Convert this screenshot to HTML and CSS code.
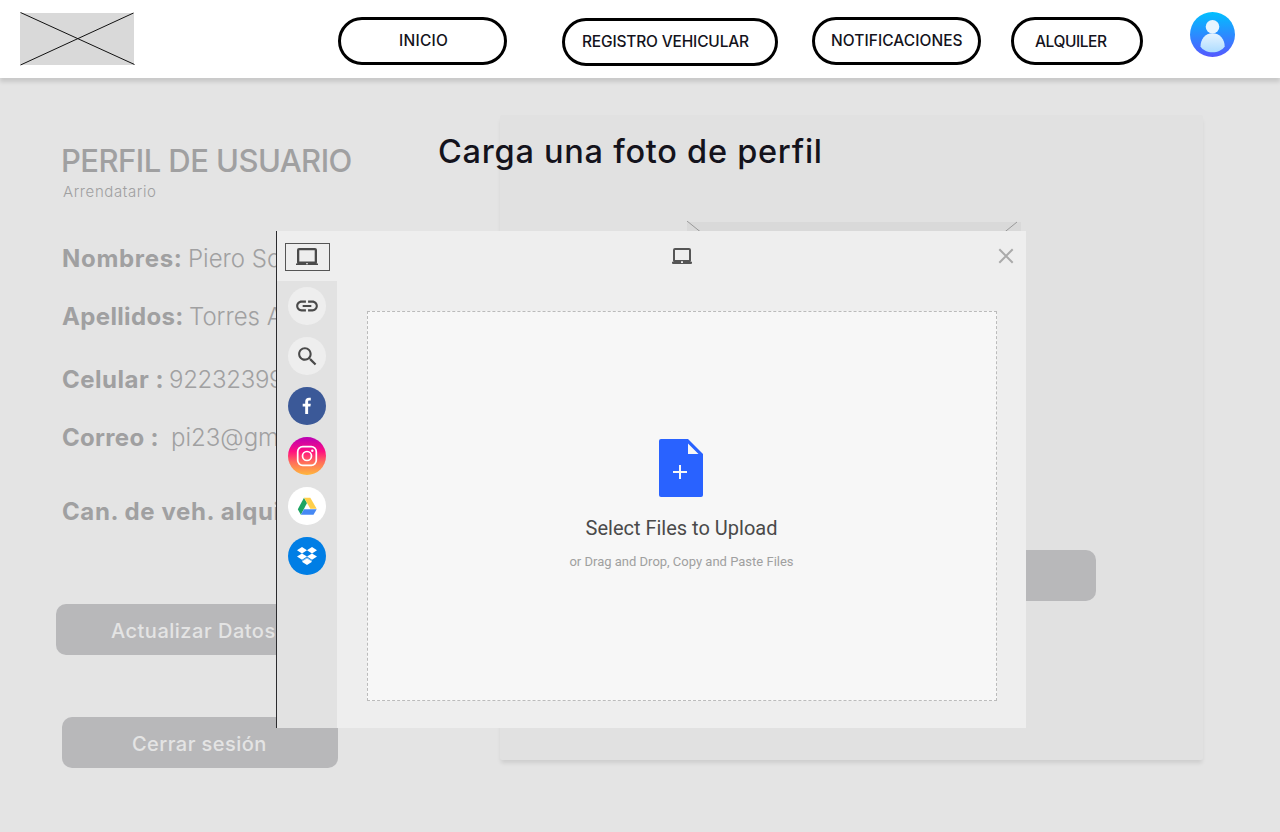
FILE: index.html
```html
<!DOCTYPE html>
<html lang="es">
<head>
<meta charset="utf-8">
<title>Perfil de usuario</title>
<link rel="stylesheet" href="styles.css">
</head>
<body>
<header class="topbar">
  <svg class="logo" width="116" height="54" viewBox="0 0 116 54"><rect x="0" y="1" width="114" height="52" fill="#d9d9d9"/><path d="M.5 .5 114.500 52.500M.5 53 113.500 1" stroke="#111" stroke-width="1" fill="none"/></svg>
  <nav class="nav">
    <a class="pill inicio"><span>INICIO</span></a>
    <a class="pill registro"><span>REGISTRO VEHICULAR</span></a>
    <a class="pill notif"><span>NOTIFICACIONES</span></a>
    <a class="pill alquiler"><span>ALQUILER</span></a>
  </nav>
  <svg class="avatar" width="45" height="45" viewBox="0 0 45 45">
    <defs>
      <linearGradient id="sky" x1="0" y1="0" x2="0" y2="1"><stop offset="0" stop-color="#00c0ff"/><stop offset="1" stop-color="#5558ff"/></linearGradient>
      <linearGradient id="torso" x1="0" y1="0" x2="0" y2="1"><stop offset="0" stop-color="#e8f4ff"/><stop offset="1" stop-color="#addcff"/></linearGradient>
    </defs>
    <circle cx="22.500" cy="22.500" r="22.500" fill="url(#sky)"/>
    <path d="M22.500 21.300C15 21.300 10.500 27.500 10.500 34.500C12.500 38 17.500 40.300 22.500 40.300S32.500 38 34.700 34.500C34.700 27.500 30 21.300 22.500 21.300Z" fill="url(#torso)"/>
    <circle cx="22.500" cy="14.700" r="6.800" fill="#e8f5ff"/>
  </svg>
</header>
<main class="page">
  <section class="profile">
    <h1>PERFIL DE USUARIO</h1>
    <p class="role">Arrendatario</p>
    <dl class="fields">
      <div class="row nombres"><dt>Nombres:</dt><dd>Piero So</dd></div>
      <div class="row apellidos"><dt>Apellidos:</dt><dd>Torres A</dd></div>
      <div class="row celular"><dt>Celular :</dt><dd>92232399</dd></div>
      <div class="row correo"><dt>Correo :</dt><dd>pi23@gmail</dd></div>
      <div class="row cantidad"><dt>Can. de veh. alqui</dt></div>
    </dl>
    <button class="btn update">Actualizar Datos</button>
    <button class="btn logout">Cerrar sesión</button>
  </section>
  <section class="panel">
    <svg class="photo" width="334" height="270" viewBox="0 0 334 270"><rect y="1" width="334" height="268" fill="#d9d9d9"/><path d="M0 0 334 270M330 1 0 269" stroke="#999" fill="none"/></svg>
    <div class="btn upload"></div>
  </section>
</main>
<h2 class="title">Carga una foto de perfil</h2>
<div class="picker">
  <aside class="sources">
    <div class="source active"><div class="focus"><svg width="24" height="24" viewBox="0 0 24 24"><path fill="#4a4a4a" fill-rule="evenodd" d="M4 3H20Q22 3 22 5V17Q22 18 21.500 18.500H23V20H1V18.500H2.500Q2 18 2 17V5Q2 3 4 3ZM4.300 5.200V16.500H19.700V5.200ZM11 18.200V19.200H13V18.200Z"/></svg></div></div>
    <div class="source"><i class="disc light"><svg width="26" height="26" viewBox="0 0 24 24"><path fill="#4a4a4a" d="M3.900 12c0-1.710 1.390-3.100 3.100-3.100h4V7H7c-2.760 0-5 2.240-5 5s2.240 5 5 5h4v-1.900H7c-1.710 0-3.100-1.390-3.100-3.100zM8 13h8v-2H8v2zm9-6h-4v1.900h4c1.710 0 3.100 1.390 3.100 3.100s-1.390 3.100-3.100 3.100h-4V17h4c2.760 0 5-2.240 5-5s-2.240-5-5-5z"/></svg></i></div>
    <div class="source"><i class="disc light"><svg width="25" height="25" viewBox="0 0 24 24"><path fill="#4a4a4a" d="M15.500 14h-.79l-.28-.27C15.410 12.590 16 11.110 16 9.500 16 5.910 13.090 3 9.500 3S3 5.910 3 9.500 5.910 16 9.500 16c1.610 0 3.090-.59 4.230-1.570l.27.280v.79l5 4.990L20.490 19l-4.990-5zm-6 0C7.010 14 5 11.990 5 9.500S7.010 5 9.500 5 14 7.010 14 9.500 11.990 14 9.500 14z"/></svg></i></div>
    <div class="source"><i class="disc facebook"><svg width="24" height="24" viewBox="0 0 24 24"><path fill="#fff" d="M10.200 20V12.600H7.700V9.700H10.200V7.700C10.200 5.100 11.700 3.700 14 3.700L15.800 3.800V6.500H14.500C13.400 6.500 13.100 7 13.100 7.900V9.700H15.800L15.400 12.600H13.100V20Z"/></svg></i></div>
    <div class="source"><i class="disc instagram"><svg width="24" height="24" viewBox="0 0 24 24" fill="none" stroke="#fff" stroke-width="1.700"><rect x="2.700" y="2.700" width="18.600" height="18.600" rx="5"/><circle cx="12" cy="12" r="4.500"/><circle cx="17.300" cy="6.700" r="1.200" fill="#fff" stroke="none"/></svg></i></div>
    <div class="source"><i class="disc drive"><svg width="24" height="24" viewBox="0 0 24 24"><path fill="#1da462" d="M9 3.700 12 9 5.900 20.800 2.800 15.200Z"/><path fill="#ffcf4a" d="M9 3.700H15.300L21.700 14.700H15.300Z"/><path fill="#4688f4" d="M9 15.300H21.700L18.500 20.800H5.900Z"/></svg></i></div>
    <div class="source"><i class="disc dropbox"><svg width="24" height="24" viewBox="0 0 24 24" fill="#fff"><path d="M7 3 12 6.200 7 9.400 2 6.200ZM17 3 22 6.200 17 9.400 12 6.200ZM7 9.400 12 12.600 7 15.800 2 12.600ZM17 9.400 22 12.600 17 15.800 12 12.600ZM12 13.500 16.700 16.600V18L12 21 7.300 18V16.600Z"/><path d="M7.300 17 12 14 16.700 17" fill="none" stroke="#007ee5" stroke-width=".5"/></svg></i></div>
  </aside>
  <div class="body">
    <div class="bar">
      <svg class="device" width="24" height="24" viewBox="0 0 24 24"><path fill="#555" fill-rule="evenodd" d="M5 4H19Q21 4 21 6V16.500L20.500 17.700H22V19Q22 20 21 20H3Q2 20 2 19V17.700H3.500L3 16.500V6Q3 4 5 4ZM5 6V16H19V6ZM11 17.300V19H13V17.300Z"/></svg>
      <svg class="close" width="16" height="16" viewBox="0 0 16 16"><path d="M1.300 1.300 14.700 14.700M14.700 1.300 1.300 14.700" stroke="#aaa" stroke-width="2"/></svg>
    </div>
    <div class="drop">
      <svg class="file" width="44" height="58" viewBox="0 0 44 58"><path fill="#2962ff" d="M2 0H29L44 15V56Q44 58 42 58H2Q0 58 0 56V2Q0 0 2 0Z"/><path fill="#f7f7f7" d="M29 4.500 39.500 15H29ZM20 26H22V32H28V34H22V40H20V34H14V32H20Z"/></svg>
      <p class="select">Select Files to Upload</p>
      <p class="hint">or Drag and Drop, Copy and Paste Files</p>
    </div>
  </div>
</div>
</body>
</html>
```
FILE: styles.css
```css
* { box-sizing: border-box; }
body { margin: 0; position: relative; width: 1280px; height: 832px; overflow: hidden; background: #e4e4e4; font-family: Inter, "Open Sans", sans-serif; }
h1, h2, p, dl, dt, dd { margin: 0; font-weight: 400; white-space: nowrap; }
svg { display: block; flex: none; }

.topbar { display: flex; align-items: flex-start; height: 78px; padding-left: 20px; background: #fff; position: relative; box-shadow: 0 4px 4px rgba(0, 0, 0, .12); }
.logo { margin-top: 12px; }
.nav { display: flex; margin: 17px 0 0 202px; width: 805px; }
.pill { flex: none; height: 48px; border: 3px solid #000; border-radius: 24px; font-size: 15.500px; line-height: 42px; font-weight: 500; color: #14131c; white-space: nowrap; }
.inicio { width: 169px; padding-left: 58px; letter-spacing: .25px; }
.registro { width: 216px; margin: 1px 0 0 55px; padding-left: 17px; letter-spacing: -.18px; }
.notif { width: 169px; margin-left: 34px; padding-left: 16px; letter-spacing: .06px; }
.alquiler { width: 132px; margin-left: 30px; padding-left: 21px; line-height: 43px; letter-spacing: -.45px; }
.avatar { margin: 12px 0 0 47px; }

.page { display: flex; height: 754px; color: #a0a0a1; }
.profile { width: 500px; flex: none; padding: 62px 0 0 62px; }
h1 { margin-left: -1px; font-size: 31px; font-weight: 500; line-height: 42px; letter-spacing: -.55px; }
.role { padding-left: 1px; font-size: 15px; line-height: 20px; font-weight: 300; letter-spacing: .6px; }
.fields { font-size: 24px; line-height: 40px; }
.row { display: flex; height: 40px; }
.nombres { margin-top: 37px; }
.apellidos { margin-top: 18px; }
.celular { margin-top: 23px; }
.correo { margin-top: 18px; }
.cantidad { margin-top: 34px; }
dt { flex: none; font-weight: 700; }
dd { font-weight: 300; }
.nombres dt { width: 126px; letter-spacing: .7px; }
.apellidos dt { width: 127px; letter-spacing: .35px; }
.celular dt { width: 107px; letter-spacing: .5px; }
.celular dd { letter-spacing: -.3px; }
.correo dt { width: 109px; letter-spacing: .3px; }
.cantidad dt { letter-spacing: .6px; }
.btn { display: block; height: 51px; border: 0; border-radius: 10px; background: #b8b8ba; color: #e4e4e4; font: 500 20px/51px Inter, sans-serif; text-align: left; white-space: nowrap; }
.update { width: 276px; margin: 72px 0 0 -6px; padding: 2px 0 0 55px; letter-spacing: .5px; }
.logout { width: 276px; margin-top: 62px; padding: 2px 0 0 70px; letter-spacing: .45px; }
.panel { width: 703px; height: 645px; margin-top: 37px; background: #e1e1e1; box-shadow: 0 4px 4px -1px rgba(0, 0, 0, .1); border-radius: 2px; }
.photo { margin: 106px 0 0 187px; }
.upload { width: 276px; margin: 59px 0 0 320px; }
.title { position: absolute; left: 438px; top: 132px; font-size: 32.500px; line-height: 40px; font-weight: 500; letter-spacing: .75px; color: #14131c; }

.picker { position: absolute; left: 276px; top: 231px; width: 750px; height: 497px; display: flex; border-left: 1px solid #2b2b2e; background: #eee; }
.sources { width: 60px; background: #e2e2e2; }
.source { height: 50px; display: flex; align-items: center; justify-content: center; }
.active { background: #eee; }
.focus { width: 45px; height: 28px; margin: 1px 0 0 1px; border: 1px solid #555; display: flex; justify-content: center; align-items: center; }
.focus svg { margin: 0 2px 0 0; }
.disc { width: 38px; height: 38px; border-radius: 50%; display: flex; align-items: center; justify-content: center; }
.light { background: #eee; }
.facebook { background: #3b5998; }
.instagram { background: linear-gradient(#b900b4 0%, #ff0f80 38%, #ff6a5c 65%, #ffb83c 100%); }
.drive { background: #fff; }
.dropbox { background: #007ee5; }
.body { flex: 1; padding: 0 29px 27px 30px; display: flex; flex-direction: column; }
.bar { height: 80px; display: flex; justify-content: space-between; padding: 13px 0 0 303px; margin-right: -17px; }
.close { margin: 4px 0 0; }
.drop { flex: 1; border: 1px dashed #bbb; background: #f7f7f7; display: flex; flex-direction: column; align-items: center; padding-top: 127px; font-family: Roboto, sans-serif; }
.file { margin-right: 2px; }
.select { margin: 19px 1px 0 0; font-size: 20px; line-height: 24px; color: #4a4a4a; }
.hint { margin: 13px 1px 0 0; font-size: 13px; line-height: 18px; color: #a0a0a0; }
```
